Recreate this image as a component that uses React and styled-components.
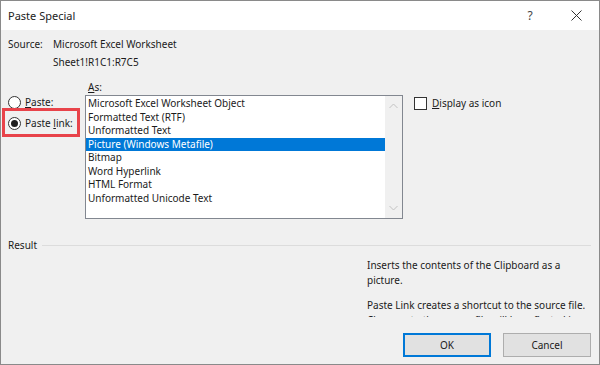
import React from "react";
import styled, { createGlobalStyle } from "styled-components";

const Global = createGlobalStyle`
  html, body {
    margin: 0;
    padding: 0;
    background: #ffffff;
  }
  body {
    font-family: "Noto Sans", "Open Sans", sans-serif;
    font-size: 10px;
    color: #1b1b1b;
  }
`;

const formats = [
  "Microsoft Excel Worksheet Object",
  "Formatted Text (RTF)",
  "Unformatted Text",
  "Picture (Windows Metafile)",
  "Bitmap",
  "Word Hyperlink",
  "HTML Format",
  "Unformatted Unicode Text",
];

function App() {
  return (
    <>
      <Global />
      <Window>
        <TitleBar>
          <Title>Paste Special</Title>
          <TitleButtons>
            <HelpButton>?</HelpButton>
            <CloseButton>
              <svg width="11" height="11" viewBox="0 0 11 11">
                <path d="M0.5 0.5L10.5 10.5M10.5 0.5L0.5 10.5" stroke="#333" strokeWidth="1" />
              </svg>
            </CloseButton>
          </TitleButtons>
        </TitleBar>

        <Body>
          <SourceGrid>
            <span>Source:</span>
            <span>Microsoft Excel Worksheet</span>
            <span />
            <span>Sheet1!R1C1:R7C5</span>
          </SourceGrid>

          <MainGrid>
            <AsLabel>
              <u>A</u>s:
            </AsLabel>

            <RadioColumn>
              <RadioRow>
                <Radio />
                <span>
                  <u>P</u>aste:
                </span>
              </RadioRow>
              <RadioRow>
                <Radio checked />
                <span>
                  Paste <u>l</u>ink:
                </span>
              </RadioRow>
              <Highlight />
            </RadioColumn>

            <ListBox>
              <Items>
                {formats.map((f, i) => (
                  <Item key={f} selected={i === 3}>
                    {f}
                  </Item>
                ))}
              </Items>
              <ScrollBar>
                <svg width="9" height="6" viewBox="0 0 9 6">
                  <path d="M0.5 5L4.5 1L8.5 5" fill="none" stroke="#c2c2c2" strokeWidth="1" />
                </svg>
                <svg width="9" height="6" viewBox="0 0 9 6">
                  <path d="M0.5 1L4.5 5L8.5 1" fill="none" stroke="#c2c2c2" strokeWidth="1" />
                </svg>
              </ScrollBar>
            </ListBox>

            <CheckRow>
              <CheckBox />
              <span>
                <u>D</u>isplay as icon
              </span>
            </CheckRow>
          </MainGrid>

          <ResultHeader>
            <span>Result</span>
            <Rule />
          </ResultHeader>

          <Description>
            <p>Inserts the contents of the Clipboard as a picture.</p>
            <p>Paste Link creates a shortcut to the source file.</p>
            <Cut>Changes to the source file will be reflected in your document.</Cut>
          </Description>

          <ButtonRow>
            <Button primary>OK</Button>
            <Button>Cancel</Button>
          </ButtonRow>
        </Body>
      </Window>
    </>
  );
}

export default App;

const Window = styled.div`
  width: 600px;
  height: 365px;
  box-sizing: border-box;
  border: 1px solid #8a8a8a;
  display: flex;
  flex-direction: column;
  overflow: hidden;
`;

const TitleBar = styled.div`
  height: 29px;
  flex: none;
  background: #ffffff;
  display: flex;
  align-items: center;
  justify-content: space-between;
  padding-left: 7px;
`;

const Title = styled.div`
  font-size: 11px;
  color: #222;
`;

const TitleButtons = styled.div`
  display: flex;
  align-items: center;
`;

const HelpButton = styled.div`
  width: 46px;
  text-align: center;
  font-size: 12px;
  color: #444;
`;

const CloseButton = styled.div`
  width: 46px;
  height: 29px;
  display: flex;
  align-items: center;
  justify-content: center;
`;

const Body = styled.div`
  flex: 1;
  background: #f0f0f0;
  padding: 7px 8px 7px 7px;
  display: flex;
  flex-direction: column;
`;

const SourceGrid = styled.div`
  display: grid;
  grid-template-columns: 45px auto;
  row-gap: 3px;
  line-height: 15px;
`;

const MainGrid = styled.div`
  margin-top: 10px;
  display: grid;
  grid-template-columns: 77px 318px 1fr;
  grid-template-rows: 15px auto;
`;

const AsLabel = styled.div`
  grid-column: 2;
  grid-row: 1;
  padding-left: 3px;
  line-height: 14px;
`;

const RadioColumn = styled.div`
  grid-column: 1;
  grid-row: 2;
  position: relative;
  display: flex;
  flex-direction: column;
  gap: 8px;
  padding-top: 1px;
`;

const RadioRow = styled.label`
  display: flex;
  align-items: center;
  gap: 4px;
  height: 13px;
  line-height: 13px;
`;

const Radio = styled.span`
  width: 11px;
  height: 11px;
  border-radius: 50%;
  border: 1px solid #333;
  background: #fff;
  position: relative;
  flex: none;
  &::after {
    content: "";
    position: absolute;
    inset: 2px;
    border-radius: 50%;
    background: ${({ checked }) => (checked ? "#1f1f1f" : "transparent")};
  }
`;

const Highlight = styled.div`
  position: absolute;
  left: -6px;
  top: 13px;
  width: 72px;
  height: 23px;
  border: 3px solid #e8434a;
  pointer-events: none;
`;

const ListBox = styled.div`
  grid-column: 2;
  grid-row: 2;
  height: 124px;
  box-sizing: border-box;
  border: 1px solid #828790;
  background: #fff;
  display: flex;
`;

const Items = styled.div`
  flex: 1;
  padding-top: 1px;
`;

const Item = styled.div`
  height: 13.5px;
  line-height: 13.5px;
  padding-left: 2px;
  white-space: nowrap;
  background: ${({ selected }) => (selected ? "#0078d7" : "transparent")};
  color: ${({ selected }) => (selected ? "#ffffff" : "#1b1b1b")};
`;

const ScrollBar = styled.div`
  width: 17px;
  background: #f0f0f0;
  display: flex;
  flex-direction: column;
  align-items: center;
  justify-content: space-between;
  padding: 7px 0 7px;
`;

const CheckRow = styled.label`
  grid-column: 3;
  grid-row: 2;
  display: flex;
  align-items: flex-start;
  gap: 5px;
  padding-left: 11px;
  padding-top: 2px;
  line-height: 13px;
  height: 13px;
`;

const CheckBox = styled.span`
  width: 11px;
  height: 11px;
  border: 1px solid #333;
  background: #fff;
  flex: none;
`;

const ResultHeader = styled.div`
  margin-top: 19px;
  display: flex;
  align-items: center;
  gap: 5px;
  line-height: 14px;
`;

const Rule = styled.div`
  flex: 1;
  height: 1px;
  background: #dcdcdc;
`;

const Description = styled.div`
  margin-left: 359px;
  margin-top: 6px;
  width: 224px;
  height: 59px;
  overflow: hidden;
  line-height: 15px;
  p {
    margin: 0 0 10px 0;
  }
`;

const Cut = styled.div`
  margin-top: -10px;
  white-space: nowrap;
`;

const ButtonRow = styled.div`
  margin-top: auto;
  display: flex;
  justify-content: flex-end;
  gap: 12px;
`;

const Button = styled.button`
  width: 88px;
  height: 24px;
  box-sizing: border-box;
  font-family: inherit;
  font-size: 10px;
  color: #1b1b1b;
  background: #e1e1e1;
  border: 1px solid ${({ primary }) => (primary ? "#0078d7" : "#adadad")};
  box-shadow: ${({ primary }) => (primary ? "inset 0 0 0 1px #0078d7" : "none")};
  padding: 0;
`;
